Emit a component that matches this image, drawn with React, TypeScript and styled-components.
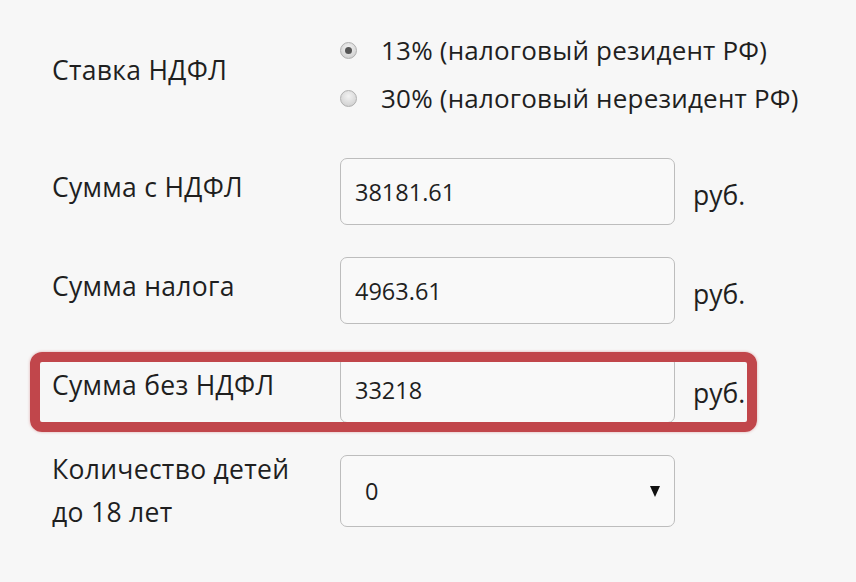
import styled, { createGlobalStyle } from 'styled-components';

const Globalstyles = createGlobalStyle`
  html, body {
    margin: 0;
    padding: 0;
    background: #f7f7f7;
  }
  body {
    font-family: "Open Sans", "Liberation Sans", sans-serif;
    color: #1f1f1f;
  }
`;

type Field = {
  label: string[];
  value: string;
  unit?: string;
  select?: boolean;
  highlight?: boolean;
};

const fields: Field[] = [
  { label: ['Сумма с НДФЛ'], value: '38181.61', unit: 'руб.' },
  { label: ['Сумма налога'], value: '4963.61', unit: 'руб.' },
  { label: ['Сумма без НДФЛ'], value: '33218', unit: 'руб.', highlight: true },
  { label: ['Количество детей', 'до 18 лет'], value: '0', select: true },
];

const App = () => {
  return (
    <Page>
      <Globalstyles />
      <Form>
        <RateRow>
          <Label>Ставка НДФЛ</Label>
          <Options>
            <Option>
              <Radio $checked />
              13% (налоговый резидент РФ)
            </Option>
            <Option>
              <Radio />
              30% (налоговый нерезидент РФ)
            </Option>
          </Options>
        </RateRow>

        {fields.map((f) => (
          <Row key={f.label[0]} $highlight={f.highlight}>
            <Label $lines={f.label.length}>
              {f.label.map((l) => (
                <span key={l}>{l}</span>
              ))}
            </Label>
            {f.select ? (
              <Select>
                {f.value}
                <Arrow />
              </Select>
            ) : (
              <Input>{f.value}</Input>
            )}
            {f.unit && <Unit>{f.unit}</Unit>}
          </Row>
        ))}
      </Form>
    </Page>
  );
};

export default App;

const Page = styled.main`
  width: 856px;
  height: 582px;
  overflow: hidden;
  box-sizing: border-box;
  padding: 26px 0 0 0;
`;

const Form = styled.div`
  display: flex;
  flex-direction: column;
  gap: 32px;
`;

const RateRow = styled.div`
  display: grid;
  grid-template-columns: 288px 1fr;
  align-items: center;
  padding-left: 52px;
  margin-bottom: 4px;
`;

const Row = styled.div<{ $highlight?: boolean }>`
  position: relative;
  display: grid;
  grid-template-columns: 288px 335px auto;
  align-items: center;
  padding-left: 52px;

  &::after {
    content: '';
    display: ${(p) => (p.$highlight ? 'block' : 'none')};
    position: absolute;
    left: 30px;
    right: 99px;
    top: -4px;
    bottom: -9px;
    border: 10px solid #c1464b;
    border-radius: 12px;
    box-shadow: 0 0 3px rgba(193, 70, 75, 0.45);
    pointer-events: none;
  }
`;

const Label = styled.div<{ $lines?: number }>`
  display: flex;
  flex-direction: column;
  font-size: 26.5px;
  line-height: 43px;
  letter-spacing: 0.3px;
  margin: ${(p) => (p.$lines && p.$lines > 1 ? '-7px 0' : '0')};
  padding-bottom: ${(p) => (p.$lines && p.$lines > 1 ? '0' : '8px')};
  white-space: nowrap;
`;

const Options = styled.div`
  display: flex;
  flex-direction: column;
`;

const Option = styled.div`
  display: flex;
  align-items: center;
  height: 48px;
  font-size: 26px;
  letter-spacing: 0.2px;
  white-space: nowrap;
`;

const Radio = styled.span<{ $checked?: boolean }>`
  position: relative;
  flex: none;
  width: 17px;
  height: 17px;
  margin-right: 24px;
  border-radius: 50%;
  box-sizing: border-box;
  border: 1px solid #b0b0b0;
  background: radial-gradient(circle at 50% 35%, #f2f2f2 0%, #d6d6d6 70%, #c2c2c2 100%);

  &::after {
    content: '';
    display: ${(p) => (p.$checked ? 'block' : 'none')};
    position: absolute;
    left: 4px;
    top: 4px;
    width: 7px;
    height: 7px;
    border-radius: 50%;
    background: #555;
  }
`;

const Input = styled.div`
  height: 67px;
  box-sizing: border-box;
  display: flex;
  align-items: center;
  padding: 0 14px;
  border: 1px solid #bdbdbd;
  border-radius: 7px;
  background: #f9f9f9;
  font-size: 23.5px;
`;

const Select = styled(Input)`
  height: 72px;
  padding: 0 14px 0 24px;
  justify-content: space-between;
`;

const Arrow = styled.span`
  width: 0;
  height: 0;
  border-left: 5px solid transparent;
  border-right: 5px solid transparent;
  border-top: 11px solid #111;
`;

const Unit = styled.div`
  margin-left: 18px;
  font-size: 26.5px;
  padding-top: 6px;
`;
